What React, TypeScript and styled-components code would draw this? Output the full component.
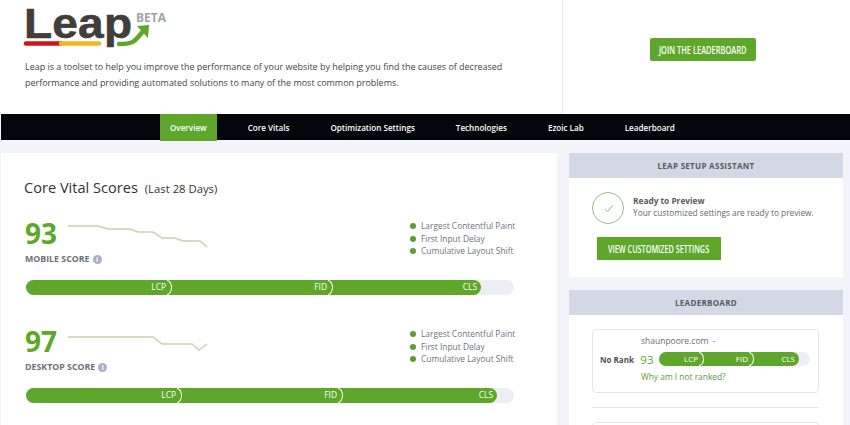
import React from 'react';
import styled, { createGlobalStyle } from 'styled-components';

const GlobalStyle = createGlobalStyle`
  html, body {
    margin: 0;
    padding: 0;
    background: #f2f4f9;
    font-family: "Open Sans", "Liberation Sans", sans-serif;
    color: #4a4a4a;
    overflow: hidden;
  }
  * { box-sizing: border-box; }
`;

const Page = styled.div`
  width: 850px;
  height: 425px;
  overflow: hidden;
`;

const Header = styled.header`
  display: grid;
  grid-template-columns: 563px 287px;
  height: 114px;
  background: #fff;
`;

const Intro = styled.div`
  padding: 0 0 0 25px;
  border-right: 1px solid #e8e8ec;
`;

const LogoRow = styled.div`
  position: relative;
  height: 59px;
`;

const LogoWord = styled.span`
  position: absolute;
  left: -1px;
  top: -1px;
  font-family: "Liberation Sans", sans-serif;
  font-weight: 700;
  font-size: 43px;
  line-height: 48px;
  letter-spacing: 0.2px;
  color: #413d3b;
  -webkit-text-stroke: 0.6px #413d3b;
  transform: scaleX(1.07);
  transform-origin: left center;
`;

const BetaTag = styled.span`
  position: absolute;
  left: 111px;
  top: 10px;
  font-family: "Open Sans", sans-serif;
  font-weight: 700;
  font-size: 12px;
  line-height: 16px;
  color: #a3a3a5;
`;

const LogoMarks = styled.svg`
  position: absolute;
  left: -3px;
  top: 0;
`;

const IntroText = styled.p`
  margin: 0;
  font-size: 8.96px;
  line-height: 16px;
  color: #444;
  white-space: nowrap;
`;

const JoinArea = styled.div`
  display: flex;
  justify-content: center;
  padding-top: 38px;
  padding-right: 8px;
`;

const CondensedLabel = styled.span<{ $scale: number }>`
  display: inline-block;
  transform: scaleX(${p => p.$scale});
  white-space: nowrap;
  font-family: "Open Sans", sans-serif;
  font-weight: 600;
  color: #fff;
`;

const JoinButton = styled.div`
  width: 106px;
  height: 23px;
  background: #5ea72b;
  border-radius: 2px;
  display: flex;
  align-items: center;
  justify-content: center;
  font-size: 10.5px;
`;

const Nav = styled.nav`
  display: flex;
  gap: 21px;
  height: 26px;
  margin-left: 1px;
  padding-left: 159px;
  background: #03060a;
  font-size: 8.1px;
  font-weight: 600;
  color: #fff;
`;

const NavItem = styled.div<{ $active?: boolean }>`
  height: ${p => (p.$active ? '27px' : '26px')};
  padding: 0 10px;
  display: flex;
  align-items: center;
  white-space: nowrap;
  background: ${p => (p.$active ? '#5ea72b' : 'transparent')};
`;

const Body = styled.div`
  display: grid;
  grid-template-columns: 556px 274px;
  gap: 12px;
  margin-left: 1px;
  padding-top: 13px;
`;

const ScoresCard = styled.section`
  height: 272px;
  background: #fff;
  padding: 25px 0 0 23px;
`;

const ScoresTitle = styled.h2`
  margin: 0 0 19px;
  font-size: 14.6px;
  line-height: 18px;
  font-weight: 400;
  color: #333;
`;

const TitleNote = styled.span`
  margin-left: 3px;
  font-size: 11.3px;
`;

const ScoreBlock = styled.div`
  height: 108px;
`;

const ScoreTop = styled.div`
  display: grid;
  grid-template-columns: 44px 148px 1fr;
  height: 63px;
`;

const ScoreColumn = styled.div`
  grid-column: 1 / 3;
  grid-row: 1;
  margin-left: 1px;
`;

const ScoreValue = styled.div`
  font-size: 28px;
  line-height: 30px;
  font-weight: 700;
  color: #5ea72b;
  margin-top: 1px;
`;

const ScoreLabel = styled.div`
  display: flex;
  align-items: center;
  gap: 3px;
  margin-top: 6px;
  font-size: 8.8px;
  line-height: 11px;
  font-weight: 700;
  color: #6d6f76;
  white-space: nowrap;
`;

const InfoDot = styled.span`
  width: 9px;
  height: 9px;
  border-radius: 50%;
  background: #a9b1c6;
  color: #fff;
  font-size: 6.5px;
  line-height: 9px;
  text-align: center;
`;

const Spark = styled.svg`
  grid-column: 2;
  grid-row: 1;
  margin-top: 7px;
`;

const Legend = styled.ul`
  grid-column: 3;
  grid-row: 1;
  list-style: none;
  margin: 3px 0 0 auto;
  padding: 0 41px 0 0;
  width: 147px;
  font-size: 8.4px;
  line-height: 12.5px;
  color: #70727a;
`;

const LegendItem = styled.li`
  display: flex;
  align-items: center;
  gap: 5px;
  white-space: nowrap;
  &::before {
    content: '';
    width: 6px;
    height: 6px;
    border-radius: 50%;
    background: #5e9a3a;
  }
`;

const Track = styled.div<{ $w: number; $h: number; $fs: number }>`
  width: ${p => p.$w}px;
  height: ${p => p.$h}px;
  border-radius: ${p => p.$h / 2}px;
  background: #eceef3;
  font-size: ${p => p.$fs}px;
  font-weight: 400;
  color: #fff;
  flex-shrink: 0;
`;

const Fill = styled.div`
  display: flex;
  height: 100%;
  background: #5ea72b;
  border-radius: inherit;
`;

const LastSegment = styled.div`
  height: 100%;
  display: flex;
  align-items: center;
  justify-content: flex-end;
  padding-right: 4px;
  line-height: 1;
`;

// the white arc that closes each metric, it sits over the green fill
const Segment = styled(LastSegment)`
  position: relative;
  padding-right: 6px;
  &::after {
    content: '';
    position: absolute;
    right: 0;
    top: 0;
    bottom: 0;
    width: 4px;
    border: 1.3px solid #fff;
    border-left: 0;
    border-radius: 0 100% 100% 0 / 0 50% 50% 0;
  }
`;

const BarRow = styled.div`
  margin-left: 2px;
`;

const Sidebar = styled.aside`
  display: flex;
  flex-direction: column;
  gap: 13px;
`;

const Panel = styled.section<{ $h: number }>`
  height: ${p => p.$h}px;
  background: #fff;
`;

const PanelHead = styled.h3`
  margin: 0;
  height: 25px;
  display: flex;
  align-items: center;
  justify-content: center;
  background: #d3d9e4;
  font-size: 8px;
  font-weight: 700;
  letter-spacing: 0.3px;
  color: #585a62;
`;

const SetupBody = styled.div`
  padding: 14px 0 0 23px;
`;

const StatusRow = styled.div`
  display: flex;
  align-items: center;
  gap: 9px;
`;

const StatusRing = styled.div`
  width: 32px;
  height: 32px;
  border-radius: 50%;
  border: 1.5px solid #96c380;
  display: flex;
  align-items: center;
  justify-content: center;
  color: #7fb567;
`;

const StatusCopy = styled.div`
  margin-top: -2px;
`;

const StatusTitle = styled.div`
  font-size: 8.3px;
  line-height: 12px;
  font-weight: 700;
  color: #5b5b60;
`;

const StatusText = styled.div`
  font-size: 8.3px;
  line-height: 12px;
  color: #66686e;
  white-space: nowrap;
`;

const ViewButton = styled.div`
  width: 124px;
  height: 23px;
  margin: 13px 0 0 5px;
  background: #5ea72b;
  display: flex;
  align-items: center;
  justify-content: center;
  font-size: 11px;
`;

const LeaderBody = styled.div`
  padding: 14px 24px 0 23px;
`;

const RankCard = styled.div`
  height: 64px;
  border: 1px solid #e3e5ea;
  border-radius: 4px;
  padding: 4px 8px 0 7px;
`;

const RankSite = styled.div`
  margin-left: 41px;
  font-size: 8.5px;
  line-height: 14px;
  color: #6a6c72;
`;

const RankLine = styled.div`
  display: flex;
  align-items: center;
  height: 22px;
`;

const RankName = styled.div`
  width: 41px;
  font-size: 8px;
  font-weight: 700;
  color: #4e4f55;
  white-space: nowrap;
`;

const RankScore = styled.div`
  width: 19px;
  font-size: 11.5px;
  color: #5ea72b;
`;

const RankLink = styled.div`
  margin-left: 41px;
  font-size: 8.4px;
  line-height: 14px;
  color: #5e9a3a;
`;

const Rule = styled.hr`
  margin: 14px 0;
  border: 0;
  border-top: 1px solid #e3e5ea;
`;

const RankCardStub = styled.div`
  height: 40px;
  border: 1px solid #e3e5ea;
  border-radius: 4px;
`;

const LEGEND = ['Largest Contentful Paint', 'First Input Delay', 'Cumulative Layout Shift'];
const NAV = ['Overview', 'Core Vitals', 'Optimization Settings', 'Technologies', 'Ezoic Lab', 'Leaderboard'];

const ScoreBar: React.FC<{ w: number; h: number; fs: number; segs: number[] }> = ({ w, h, fs, segs }) => (
  <Track $w={w} $h={h} $fs={fs}>
    <Fill style={{ width: segs[0] + segs[1] + segs[2] }}>
      <Segment style={{ width: segs[0] }}>LCP</Segment>
      <Segment style={{ width: segs[1] }}>FID</Segment>
      <LastSegment style={{ width: segs[2] }}>CLS</LastSegment>
    </Fill>
  </Track>
);

const ScoreSection: React.FC<{ value: number; label: string; points: string; segs: number[] }> = ({
  value,
  label,
  points,
  segs,
}) => (
  <ScoreBlock>
    <ScoreTop>
      <ScoreColumn>
        <ScoreValue>{value}</ScoreValue>
        <ScoreLabel>
          {label}
          <InfoDot>i</InfoDot>
        </ScoreLabel>
      </ScoreColumn>
      <Spark width="142" height="28" viewBox="0 0 142 28">
        <polyline points={points} fill="none" stroke="#bcd7ae" strokeWidth="1.5" />
      </Spark>
      <Legend>
        {LEGEND.map(item => (
          <LegendItem key={item}>{item}</LegendItem>
        ))}
      </Legend>
    </ScoreTop>
    <BarRow>
      <ScoreBar w={488} h={15} fs={8.4} segs={segs} />
    </BarRow>
  </ScoreBlock>
);

const App: React.FC = () => (
  <Page>
    <GlobalStyle />
    <Header>
      <Intro>
        <LogoRow>
          <LogoWord>Leap</LogoWord>
          <BetaTag>BETA</BetaTag>
          <LogoMarks width="150" height="60" viewBox="0 0 150 60">
            <path d="M4 43.5H39" stroke="#d0141a" strokeWidth="4.5" strokeLinecap="round" />
            <path d="M39 43.5H77" stroke="#f3b61f" strokeWidth="4.5" strokeLinecap="round" />
            <path d="M97 44c13 0 15-2 20-8l6-7" fill="none" stroke="#5ea72b" strokeWidth="4.5" strokeLinecap="round" />
            <path d="M115 26l12-1-1 13z" fill="#5ea72b" />
          </LogoMarks>
        </LogoRow>
        <IntroText>
          Leap is a toolset to help you improve the performance of your website by helping you find the causes of decreased
          <br />
          performance and providing automated solutions to many of the most common problems.
        </IntroText>
      </Intro>
      <JoinArea>
        <JoinButton>
          <CondensedLabel $scale={0.71}>JOIN THE LEADERBOARD</CondensedLabel>
        </JoinButton>
      </JoinArea>
    </Header>
    <Nav>
      {NAV.map((item, i) => (
        <NavItem key={item} $active={i === 0}>
          {item}
        </NavItem>
      ))}
    </Nav>
    <Body>
      <ScoresCard>
        <ScoresTitle>
          Core Vital Scores <TitleNote>(Last 28 Days)</TitleNote>
        </ScoresTitle>
        <ScoreSection
          value={93}
          label="MOBILE SCORE"
          points="0,2 30,2 40,5 62,5 70,8 85,8 94,14 107,14 115,17 132,17 139,23"
          segs={[146, 161, 148]}
        />
        <ScoreSection
          value={97}
          label="DESKTOP SCORE"
          points="0,5 85,5 94,12 124,12 131,18 139,12"
          segs={[156, 161, 154]}
        />
      </ScoresCard>
      <Sidebar>
        <Panel $h={124}>
          <PanelHead>LEAP SETUP ASSISTANT</PanelHead>
          <SetupBody>
            <StatusRow>
              <StatusRing>
                <svg width="11" height="11" viewBox="0 0 12 12">
                  <path d="M2 6.5L5 9.5 10.5 2.5" fill="none" stroke="currentColor" strokeWidth="1" />
                </svg>
              </StatusRing>
              <StatusCopy>
                <StatusTitle>Ready to Preview</StatusTitle>
                <StatusText>Your customized settings are ready to preview.</StatusText>
              </StatusCopy>
            </StatusRow>
            <ViewButton>
              <CondensedLabel $scale={0.66}>VIEW CUSTOMIZED SETTINGS</CondensedLabel>
            </ViewButton>
          </SetupBody>
        </Panel>
        <Panel $h={135}>
          <PanelHead>LEADERBOARD</PanelHead>
          <LeaderBody>
            <RankCard>
              <RankSite>shaunpoore.com &nbsp;-</RankSite>
              <RankLine>
                <RankName>No Rank</RankName>
                <RankScore>93</RankScore>
                <ScoreBar w={151} h={14} fs={8} segs={[45, 50, 45]} />
              </RankLine>
              <RankLink>Why am I not ranked?</RankLink>
            </RankCard>
            <Rule />
            <RankCardStub />
          </LeaderBody>
        </Panel>
      </Sidebar>
    </Body>
  </Page>
);

export default App;
